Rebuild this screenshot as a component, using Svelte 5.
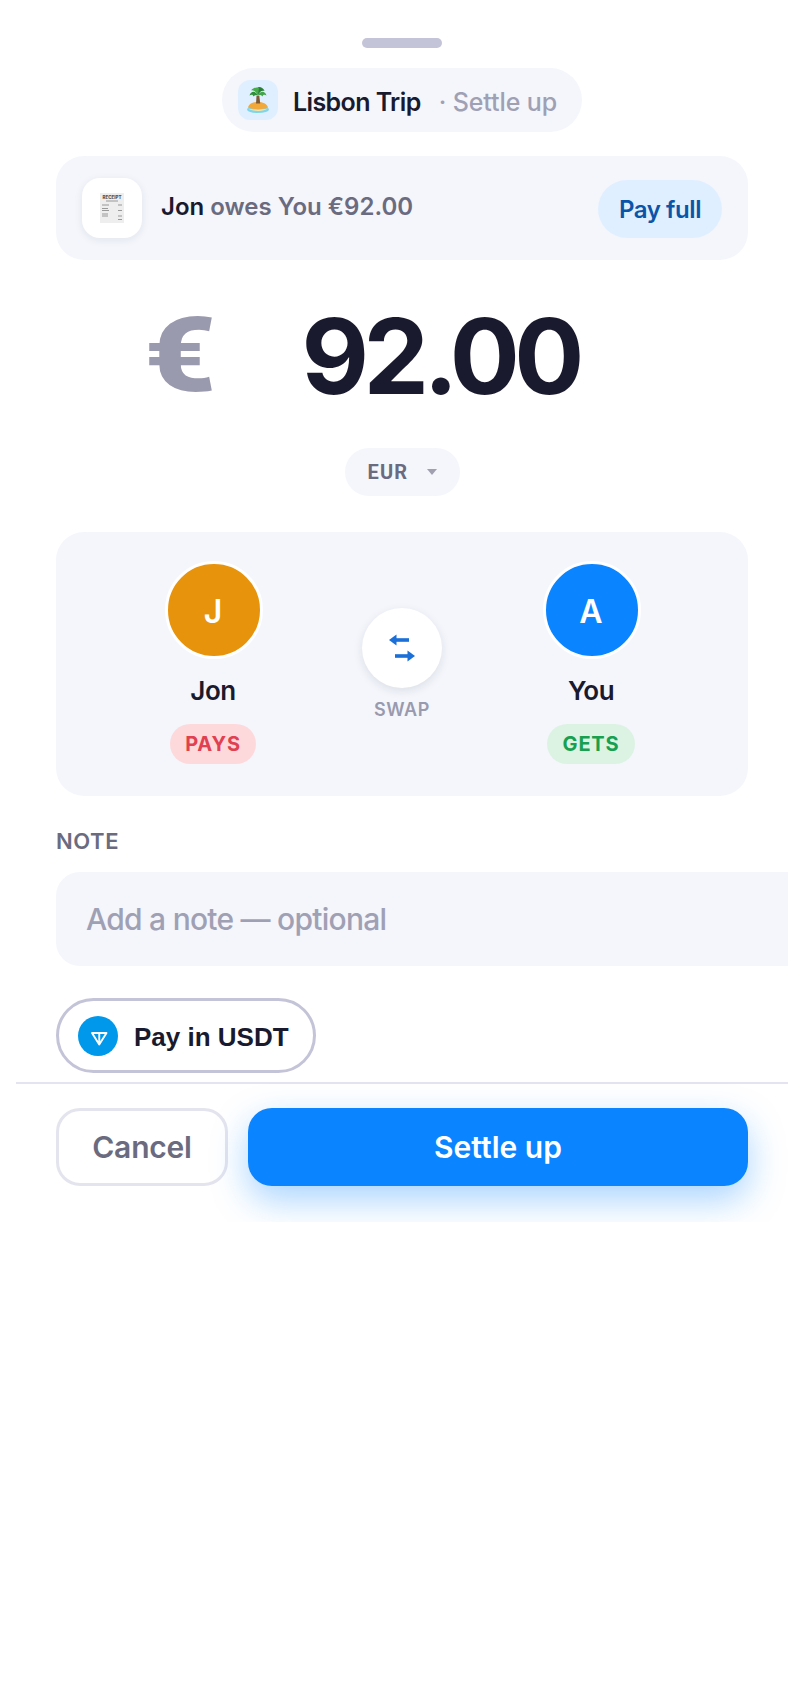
<script>
  const people = [
    { initial: 'J', name: 'Jon', role: 'PAYS', tone: 'jon' },
    { initial: 'A', name: 'You', role: 'GETS', tone: 'you' }
  ];
</script>

<div class="sheet">
  <div class="handle"></div>

  <div class="trip">
    <span class="trip-icon">
      <svg viewBox="0 0 24 28" width="24" height="28" aria-hidden="true">
        <ellipse cx="12" cy="23.4" rx="11" ry="3.6" fill="#7fd6ea" />
        <path d="M2 21.5c1-4 5.500-5.500 10-5.500s9 1.500 10 5.500c-3 2.200-17 2.200-20 0z" fill="#f2a93b" />
        <path d="M2.500 22.500c4 1.500 15 1.500 19 0-3 3.200-16 3.200-19 0z" fill="#f7e7b0" />
        <path d="M10.500 9.500h2.800l.9 8h-4.200z" fill="#7d5a34" />
        <path d="M12 9C9 4.500 5 5 3.500 9.500 5.500 8 7 8.500 7.500 10.500 8.500 9 10 8.800 12 9z" fill="#2f8f3c" />
        <path d="M12 9c3-4.500 7-4 8.500.5-2-1.500-3.500-1-4 1C15.500 9 14 8.800 12 9z" fill="#3fa648" />
        <path d="M12 9C10 5 10.500 1.500 13 1c2.500 0 5 2 5.500 4C16 4 14 5.500 12 9z" fill="#2a7f36" />
        <path d="M12 9C9.500 5.500 7 3.500 5 4.500 7 1.800 11 .8 13 2z" fill="#46ab4c" />
      </svg>
    </span>
    <span class="trip-name">Lisbon Trip</span>
    <span class="trip-sub">· Settle up</span>
  </div>

  <div class="owes">
    <span class="receipt">
      <svg viewBox="0 0 24 30" width="24" height="30" aria-hidden="true">
        <rect width="24" height="30" fill="#eeeeee" />
        <text x="12" y="5.500" text-anchor="middle" class="receipt-word">RECEIPT</text>
        <path d="M6 8h12M2 12h7M18 12h4M2 15.500h6M2 17.500h7M18 17.500h4M2 21h6M2 23h6M18 23h4M18 26.500h4" stroke="#555" stroke-width="1" opacity=".55" />
      </svg>
    </span>
    <p class="owes-text"><strong>Jon</strong> owes You €92.00</p>
    <button class="pay-full">Pay full</button>
  </div>

  <div class="amount">
    <span class="symbol">€</span>
    <span class="value">92.00</span>
  </div>

  <div class="currency-row">
    <div class="currency">
      <span>EUR</span>
      <span class="caret"></span>
    </div>
  </div>

  <div class="parties">
    {#each people as person, i}
      {#if i === 1}
        <div class="swap">
          <button class="swap-btn" aria-label="Swap">
            <svg viewBox="0 0 40 40" width="40" height="40" aria-hidden="true">
              <path d="M13 12h14" stroke="#1a6fd8" stroke-width="3.600" />
              <path d="M7 12l7.500-5.500v11z" fill="#1a6fd8" />
              <path d="M13 28h14" stroke="#1a6fd8" stroke-width="3.600" />
              <path d="M33 28l-7.500-5.500v11z" fill="#1a6fd8" />
            </svg>
          </button>
          <span class="swap-label">SWAP</span>
        </div>
      {/if}
      <div class="party">
        <div class="avatar {person.tone}"><span class="initial">{person.initial}</span></div>
        <div class="party-name">{person.name}</div>
        <div class="badge {person.tone}">{person.role}</div>
      </div>
    {/each}
  </div>

  <label class="note-label" for="note">NOTE</label>
  <input id="note" class="note" placeholder="Add a note — optional" />

  <button class="usdt">
    <span class="ton">
      <svg viewBox="0 0 40 40" width="40" height="40" aria-hidden="true">
        <path d="M14 17h14.500l-7.250 11.500zM21.250 17v11.500" fill="none" stroke="#fff" stroke-width="1.900" stroke-linejoin="round" />
      </svg>
    </span>
    <span class="usdt-label">Pay in USDT</span>
  </button>

  <div class="divider"></div>

  <div class="actions">
    <button class="cancel">Cancel</button>
    <button class="settle">Settle up</button>
  </div>
</div>

<style>
  :global(body) {
    margin: 0;
    background: #fff;
  }

  .sheet {
    box-sizing: border-box;
    width: 772px;
    margin-left: 16px;
    padding: 38px 40px 36px;
    overflow: hidden;
    font-family: Inter, "Liberation Sans", sans-serif;
    color: #1a1a2e;
    background: #fff;
  }

  button {
    font-family: inherit;
    cursor: pointer;
  }

  .handle {
    width: 80px;
    height: 10px;
    border-radius: 5px;
    background: #c4c4d8;
    margin: 0 auto 20px;
  }

  .trip {
    width: 360px;
    height: 64px;
    box-sizing: border-box;
    margin: 0 auto 24px;
    padding-left: 16px;
    border-radius: 32px;
    background: #f4f6fc;
    display: flex;
    align-items: center;
  }

  .trip-icon {
    width: 40px;
    height: 40px;
    border-radius: 12px;
    background: #e0efff;
    display: flex;
    align-items: center;
    justify-content: center;
    margin-right: 15px;
  }

  .trip-name {
    margin: 3px 18px 0 0;
    font-size: 25px;
    font-weight: 600;
    letter-spacing: -0.6px;
  }

  .trip-sub {
    margin-top: 3px;
    font-size: 25px;
    font-weight: 500;
    letter-spacing: -0.1px;
    color: #a0a0b4;
  }

  .owes {
    height: 104px;
    box-sizing: border-box;
    border-radius: 28px;
    background: #f4f6fc;
    padding: 0 26px;
    display: flex;
    align-items: center;
  }

  .receipt {
    width: 60px;
    height: 60px;
    border-radius: 18px;
    background: #fff;
    box-shadow: 0 2px 8px rgba(26, 26, 46, 0.08);
    display: flex;
    align-items: center;
    justify-content: center;
    margin-right: 19px;
    flex: none;
  }

  .receipt-word {
    font-size: 4.500px;
    font-weight: 800;
    fill: #555;
  }

  .owes-text {
    margin: 0 0 4px;
    flex: 1;
    font-size: 24px;
    font-weight: 600;
    letter-spacing: 0;
    color: #6b6b80;
  }

  .owes-text strong {
    font-weight: 600;
    color: #1a1a2e;
  }

  .pay-full {
    width: 124px;
    height: 58px;
    margin-top: 2px;
    border: 0;
    border-radius: 29px;
    background: #e0efff;
    color: #0a55a8;
    font-size: 24px;
    font-weight: 600;
    letter-spacing: -0.4px;
    padding: 0;
  }

  .amount {
    height: 188px;
    box-sizing: border-box;
    padding: 4px 80px 0 0;
    display: flex;
    justify-content: center;
    align-items: center;
    gap: 96px;
    font-size: 104px;
    line-height: 1;
    font-weight: 700;
    letter-spacing: -5.5px;
  }

  .symbol {
    display: inline-block;
    font-family: Roboto, sans-serif;
    font-weight: 900;
    letter-spacing: 0;
    color: #9a9aae;
    transform: translateX(5px) scaleX(1.2);
  }

  .currency-row {
    display: flex;
    justify-content: center;
    margin-bottom: 36px;
  }

  .currency {
    width: 115px;
    height: 48px;
    box-sizing: border-box;
    padding-left: 23px;
    border-radius: 24px;
    background: #f4f6fc;
    display: flex;
    align-items: center;
    gap: 19px;
    font-family: "Roboto", sans-serif;
    font-size: 20px;
    font-weight: 700;
    letter-spacing: 1.200px;
    color: #6b6b80;
  }

  .caret {
    width: 0;
    height: 0;
    border-left: 5px solid transparent;
    border-right: 5px solid transparent;
    border-top: 6px solid #a0a0b0;
  }

  .parties {
    height: 264px;
    box-sizing: border-box;
    padding: 29px 0 0 2px;
    border-radius: 28px;
    background: #f4f6fc;
    display: flex;
    justify-content: center;
    align-items: flex-start;
    gap: 98px;
    margin-bottom: 32px;
  }

  .party {
    width: 100px;
    display: flex;
    flex-direction: column;
    align-items: center;
  }

  .avatar {
    width: 98px;
    height: 98px;
    box-sizing: border-box;
    border: 3px solid #fff;
    border-radius: 50%;
    display: flex;
    align-items: center;
    justify-content: center;
    color: #fff;
    font-size: 32px;
    font-weight: 600;
  }

  .initial {
    margin: 3px 2px 0 0;
  }

  .avatar.jon {
    background: #e8930c;
  }

  .avatar.you {
    background: #0a84ff;
  }

  .party-name {
    margin: 17px 2px 0 0;
    font-size: 26px;
    line-height: 30px;
    font-weight: 600;
    letter-spacing: -0.5px;
  }

  .badge {
    margin: 18px 2px 0 0;
    height: 40px;
    padding: 0 15px;
    border-radius: 20px;
    display: flex;
    align-items: center;
    font-size: 20px;
    font-weight: 700;
    letter-spacing: 0.8px;
    white-space: nowrap;
  }

  .badge.jon {
    background: #fdd9dc;
    color: #e04050;
  }

  .badge.you {
    background: #dcf3e3;
    color: #16a050;
    padding: 0 16px;
  }

  .swap {
    width: 80px;
    margin-right: 2px;
    padding-top: 47px;
    display: flex;
    flex-direction: column;
    align-items: center;
  }

  .swap-btn {
    width: 80px;
    height: 80px;
    border: 0;
    padding: 0;
    border-radius: 50%;
    background: #fff;
    box-shadow: 0 3px 10px rgba(26, 26, 46, 0.1);
    display: flex;
    align-items: center;
    justify-content: center;
  }

  .swap-label {
    margin-top: 11px;
    font-size: 18px;
    line-height: 22px;
    font-weight: 600;
    letter-spacing: 0.6px;
    color: #9a9aae;
  }

  .note-label {
    display: block;
    font-size: 22px;
    line-height: 26px;
    font-weight: 600;
    letter-spacing: 0.6px;
    color: #6b6b80;
    margin-bottom: 18px;
  }

  .note {
    display: block;
    box-sizing: border-box;
    width: 760px;
    height: 94px;
    padding: 0 30px;
    border: 0;
    outline: 0;
    border-radius: 24px;
    background: #f4f6fc;
    font-family: inherit;
    font-size: 30px;
    font-weight: 500;
    letter-spacing: -0.75px;
    color: #1a1a2e;
    margin-bottom: 32px;
  }

  .note::placeholder {
    color: #a0a0b4;
    opacity: 1;
  }

  .usdt {
    box-sizing: border-box;
    width: 260px;
    height: 75px;
    padding: 0 0 0 19px;
    border: 3px solid #c4c4d8;
    border-radius: 38px;
    background: #fff;
    color: #1a1a2e;
    display: flex;
    align-items: center;
    gap: 16px;
    font-family: "Liberation Sans", sans-serif;
    font-size: 26px;
    font-weight: 700;
    letter-spacing: 0;
  }

  .usdt-label {
    margin-top: 3px;
  }

  .ton {
    width: 40px;
    height: 40px;
    border-radius: 50%;
    background: #0098ea;
    display: block;
    flex: none;
  }

  .ton svg {
    display: block;
  }

  .divider {
    height: 2px;
    margin: 9px -40px 24px;
    background: #e4e4f0;
  }

  .actions {
    display: flex;
    gap: 20px;
  }

  .cancel {
    width: 172px;
    height: 78px;
    box-sizing: border-box;
    border: 3px solid #e4e4ee;
    border-radius: 24px;
    background: #fff;
    color: #6b6b80;
    font-size: 30px;
    font-weight: 600;
    letter-spacing: -0.2px;
    padding: 0;
  }

  .settle {
    flex: 1;
    height: 78px;
    border: 0;
    border-radius: 24px;
    background: #0a84ff;
    color: #fff;
    font-size: 30px;
    font-weight: 600;
    letter-spacing: 0;
    box-shadow: 0 14px 36px rgba(10, 132, 255, 0.35);
    padding: 0;
  }
</style>
